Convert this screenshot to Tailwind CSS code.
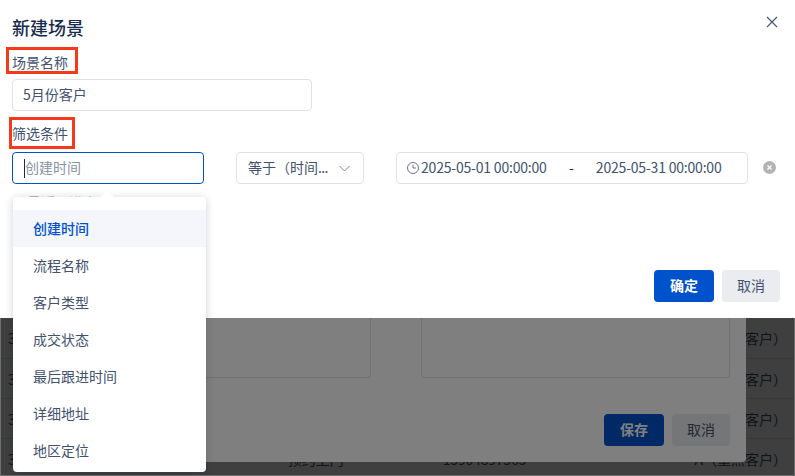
<!DOCTYPE html>
<html lang="zh-CN">
<head>
    <meta charset="UTF-8">
    <meta name="viewport" content="width=device-width, initial-scale=1.0">
    <title>新建场景</title>
    <script src="https://cdn.jsdelivr.net/npm/@tailwindcss/browser@4"></script>
</head>
<body class="bg-white">
    <div class="relative w-[795px] h-[476px] overflow-hidden flex flex-col font-['Noto_Sans_CJK_SC',sans-serif] text-sm text-[#42526e]">

        <!-- Dialog -->
        <div class="relative z-10 h-[318px] shrink-0 bg-white pl-3 pt-[16px]">
            <h1 class="text-[18px] leading-[22px] font-medium text-[#172b4d]">新建场景</h1>
            <button class="absolute left-[766px] top-[16px] text-[#42526e]">
                <svg class="w-3 h-3" viewBox="0 0 12 12" fill="none" stroke="currentColor" stroke-width="1.1"><path d="M1 1l10 10M11 1L1 11"/></svg>
            </button>

            <div class="mt-[13px] leading-[22px]">场景名称</div>
            <div class="mt-[6px] w-[300px] h-8 flex items-center pl-[10px] pb-[2px] rounded border border-[#dfe1e6]">5月份客户</div>

            <div class="mt-[11px] leading-[22px]">筛选条件</div>
            <div class="mt-2 flex items-center">
                <div class="w-[192px] h-8 flex items-center pl-[11px] rounded border border-[#0052cc]">
                    <span class="w-px h-[19px] bg-[#172b4d]"></span>
                    <span class="pb-[2px] text-[#8993a4]">创建时间</span>
                </div>
                <div class="ml-8 w-[128px] h-8 flex items-center justify-between pl-[11px] pr-[13px] rounded border border-[#dfe1e6]">
                    <span class="pb-[2px]">等于（时间<span class="tracking-[-0.6px]">...</span></span>
                    <svg class="w-[11px] h-[7px]" viewBox="0 0 11 7" fill="none" stroke="#7a869a" stroke-width="1"><path d="M.5 1l5 5 5-5"/></svg>
                </div>
                <div class="ml-8 w-[352px] h-8 flex items-center pl-[10px] rounded border border-[#dfe1e6]">
                    <svg class="w-3 h-3 shrink-0" viewBox="0 0 12 12" fill="none" stroke="#42526e" stroke-width=".8"><circle cx="6" cy="6" r="5.5"/><path d="M6 2.6V6h3"/></svg>
                    <span class="ml-[2px] pb-[2px] w-[126px] whitespace-nowrap tracking-[-0.2px]">2025-05-01 00:00:00</span>
                    <span class="ml-[22px] pb-[2px] text-[#172b4d]">-</span>
                    <span class="ml-[22px] pb-[2px] w-[126px] whitespace-nowrap tracking-[-0.2px]">2025-05-31 00:00:00</span>
                </div>
                <div class="ml-[15px] -mt-[2px] w-[13px] h-[13px] rounded-full bg-[#b3b3b3] flex items-center justify-center">
                    <svg class="w-[5px] h-[5px]" viewBox="0 0 5 5" fill="none" stroke="#fff" stroke-width="1.2"><path d="M.5.5l4 4M4.5.5l-4 4"/></svg>
                </div>
            </div>

            <div class="mt-[86px] pr-[15px] flex justify-end gap-2">
                <button class="w-[60px] h-8 pb-[2px] rounded bg-[#0052cc] text-white font-bold">确定</button>
                <button class="w-[58px] h-8 pb-[2px] rounded bg-[#ebecf0]">取消</button>
            </div>

            <!-- Red annotation boxes -->
            <div class="absolute left-[6px] top-[47px] w-[72px] h-[27px] border-[3px] border-[#f5391a]"></div>
            <div class="absolute left-[9px] top-[117px] w-[66px] h-[32px] border-[3px] border-[#f5391a]"></div>
        </div>

        <!-- Page behind the dialog -->
        <div class="relative flex-1 bg-white">
            <div class="flex flex-col">
                <div class="h-[41px] pt-[10px] pl-2 pr-[8px] flex justify-between leading-[20px] border-b border-[#dfe1e6]"><span>3</span><span>客户）</span></div>
                <div class="h-10 pt-[10px] pl-2 pr-[8px] flex justify-between leading-[20px] border-b border-[#dfe1e6]"><span>3</span><span>客户）</span></div>
                <div class="h-10 pt-[10px] pl-2 pr-[8px] flex justify-between leading-[20px] border-b border-[#dfe1e6]"><span>3</span><span>客户）</span></div>
                <div class="h-[37px] pt-[10px] pl-2 pr-[8px] flex leading-[20px]">
                    <span>3</span>
                    <span class="ml-[272px]">预约上门</span>
                    <span class="ml-[99px] tracking-[-0.2px]">13904897563</span>
                    <span class="ml-auto">A（重点客户）</span>
                </div>
            </div>
            <div class="absolute inset-0 bg-black/50"></div>

            <!-- Edit dialog behind -->
            <div class="absolute left-[49px] top-0 w-[697px] h-[144px] bg-white rounded-b-sm pl-[17px] pr-[16px]">
                <div class="flex gap-[50px]">
                    <div class="w-[305px] h-[60px] border border-t-0 border-[#dfe1e6] rounded-b-sm"></div>
                    <div class="flex-1 h-[60px] border border-t-0 border-[#dfe1e6] rounded-b-sm"></div>
                </div>
                <div class="mt-9 flex justify-end gap-2">
                    <button class="w-[60px] h-8 pb-[2px] rounded bg-[#0052cc] text-white font-bold">保存</button>
                    <button class="w-[58px] h-8 pb-[2px] rounded bg-[#ebecf0]">取消</button>
                </div>
            </div>
            <div class="absolute inset-0 bg-black/50"></div>
            <div class="absolute inset-0 border border-t-0 border-[#6f6f6f]"></div>
        </div>

        <!-- Field dropdown -->
        <div class="absolute z-20 left-[27px] top-[192px] text-[#a5adba] whitespace-nowrap">最近跟进人</div>
        <div class="absolute z-20 left-[13px] top-[197px] w-[193px] h-[275px] bg-white rounded shadow-[0_1px_8px_rgba(9,30,66,0.2)] pt-[13px]">
            <div class="absolute left-[89px] -top-[5px] w-[10px] h-[10px] rotate-45 bg-white"></div>
            <div class="h-[37px] pl-5 pb-[2px] flex items-center bg-[#f4f6fb] text-[#0052cc] font-medium">创建时间</div>
            <div class="h-[37px] pl-5 pb-[2px] flex items-center">流程名称</div>
            <div class="h-[37px] pl-5 pb-[2px] flex items-center">客户类型</div>
            <div class="h-[37px] pl-5 pb-[2px] flex items-center">成交状态</div>
            <div class="h-[37px] pl-5 pb-[2px] flex items-center">最后跟进时间</div>
            <div class="h-[37px] pl-5 pb-[2px] flex items-center">详细地址</div>
            <div class="h-[37px] pl-5 pb-[2px] flex items-center">地区定位</div>
        </div>
    </div>
</body>
</html>
